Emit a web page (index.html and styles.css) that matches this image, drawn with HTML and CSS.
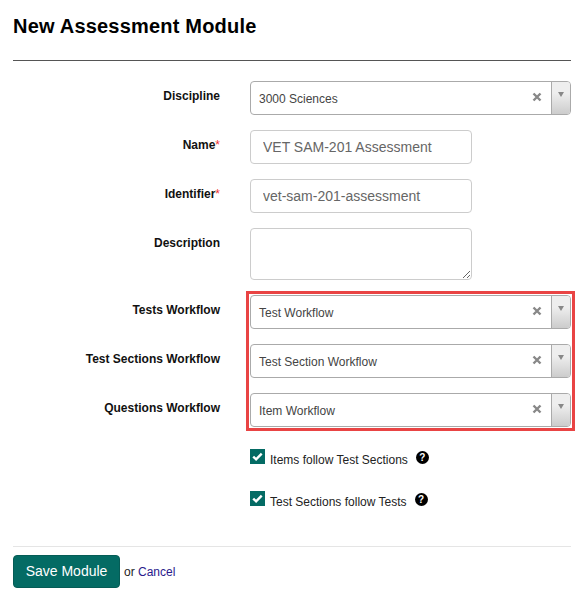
FILE: index.html
```html
<!DOCTYPE html>
<html lang="en">
<head>
    <meta charset="UTF-8">
    <meta name="viewport" content="width=device-width, initial-scale=1.0">
    <title>New Assessment Module</title>
    <link rel="stylesheet" href="styles.css">
</head>
<body>
    <h1>New Assessment Module</h1>
    <hr class="title-rule">

    <form class="module-form">
        <div class="form-row">
            <label class="row-label">Discipline</label>
            <div class="select-box">
                <span class="select-value">3000 Sciences</span>
                <span class="select-clear"><svg width="10" height="10" viewBox="0 0 10 10"><path d="M1.5 1.5l7 7M8.5 1.5l-7 7"/></svg></span>
                <span class="select-arrow"></span>
            </div>
        </div>
        <div class="form-row">
            <label class="row-label">Name<span class="required">*</span></label>
            <input class="text-input" type="text" value="VET SAM-201 Assessment">
        </div>
        <div class="form-row">
            <label class="row-label">Identifier<span class="required">*</span></label>
            <input class="text-input" type="text" value="vet-sam-201-assessment">
        </div>
        <div class="form-row">
            <label class="row-label">Description</label>
            <textarea class="text-area"></textarea>
        </div>

        <div class="workflow-group">
            <div class="form-row">
                <label class="row-label">Tests Workflow</label>
                <div class="select-box">
                    <span class="select-value">Test Workflow</span>
                    <span class="select-clear"><svg width="10" height="10" viewBox="0 0 10 10"><path d="M1.5 1.5l7 7M8.5 1.5l-7 7"/></svg></span>
                    <span class="select-arrow"></span>
                </div>
            </div>
            <div class="form-row">
                <label class="row-label">Test Sections Workflow</label>
                <div class="select-box">
                    <span class="select-value">Test Section Workflow</span>
                    <span class="select-clear"><svg width="10" height="10" viewBox="0 0 10 10"><path d="M1.5 1.5l7 7M8.5 1.5l-7 7"/></svg></span>
                    <span class="select-arrow"></span>
                </div>
            </div>
            <div class="form-row">
                <label class="row-label">Questions Workflow</label>
                <div class="select-box">
                    <span class="select-value">Item Workflow</span>
                    <span class="select-clear"><svg width="10" height="10" viewBox="0 0 10 10"><path d="M1.5 1.5l7 7M8.5 1.5l-7 7"/></svg></span>
                    <span class="select-arrow"></span>
                </div>
            </div>
            <div class="highlight"></div>
        </div>

        <div class="check-row">
            <span class="check-box"><svg width="15" height="15" viewBox="0 0 15 15"><path d="M3.2 7.6l2.9 2.7 5.6-5.6"/></svg></span>
            <span class="check-label">Items follow Test Sections</span>
            <span class="help-icon">?</span>
        </div>
        <div class="check-row">
            <span class="check-box"><svg width="15" height="15" viewBox="0 0 15 15"><path d="M3.2 7.6l2.9 2.7 5.6-5.6"/></svg></span>
            <span class="check-label">Test Sections follow Tests</span>
            <span class="help-icon">?</span>
        </div>

        <div class="form-actions">
            <button class="save-btn" type="button">Save Module</button>
            <span class="or-text">or <a href="#">Cancel</a></span>
        </div>
    </form>
</body>
</html>
```

FILE: styles.css
```css
body {
    margin: 0;
    padding: 0 6px 0 13px;
    background: #fff;
    color: #000;
    font-family: "Liberation Sans", Arial, sans-serif;
    font-size: 12px;
}
h1 {
    margin: 0;
    padding-top: 13px;
    font-size: 20px;
    letter-spacing: 0.2px;
    line-height: 26px;
    font-weight: bold;
}
.title-rule {
    margin: 21px 0 20px;
    border: 0;
    border-top: 1px solid #555;
}
.form-row {
    display: flex;
    align-items: flex-start;
    margin-bottom: 15px;
}
.row-label {
    width: 207px;
    padding-top: 7px;
    margin-right: 30px;
    text-align: right;
    font-weight: bold;
    line-height: 16px;
    color: #111;
}
.required {
    color: #e33;
    font-weight: normal;
}
.select-box {
    display: flex;
    align-items: stretch;
    box-sizing: border-box;
    width: 321px;
    height: 34px;
    border: 1px solid #aaa;
    border-radius: 4px;
    background: #fff;
}
.select-value {
    flex: 1;
    padding: 9px 0 0 8px;
    line-height: 16px;
    color: #444;
}
.select-clear {
    width: 10px;
    margin-right: 9px;
    padding-top: 9px;
}
.select-clear path {
    fill: none;
    stroke: #888;
    stroke-width: 2.4;
}
.select-arrow {
    position: relative;
    width: 18px;
    border-left: 1px solid #aaa;
    border-radius: 0 3px 3px 0;
    background: linear-gradient(#eee, #eee 35%, #ccc);
}
.select-arrow::after {
    content: "";
    position: absolute;
    left: 6px;
    top: 10px;
    border: 3.5px solid transparent;
    border-top: 5px solid #888;
    border-bottom: 0;
}
.text-input,
.text-area {
    box-sizing: border-box;
    width: 222px;
    border: 1px solid #ccc;
    border-radius: 4px;
    font-family: inherit;
    font-size: 14px;
    color: #666;
    outline: 0;
}
.text-input {
    height: 34px;
    padding: 0 12px;
}
.text-area {
    display: block;
    height: 52px;
    padding: 6px 12px;
}
.workflow-group {
    position: relative;
    margin-bottom: 22px;
}
.highlight {
    position: absolute;
    left: 233px;
    top: -4px;
    width: 329px;
    height: 140px;
    box-sizing: border-box;
    border: 3px solid #e94444;
}
.check-row {
    display: flex;
    align-items: flex-start;
    margin: 0 0 26px 237px;
    height: 16px;
}
.check-box {
    width: 15px;
    height: 15px;
    background: #046b64;
}
.check-box svg {
    display: block;
}
.check-box path {
    fill: none;
    stroke: #fff;
    stroke-width: 2.4;
}
.check-label {
    margin-left: 5px;
    padding-top: 4px;
    line-height: 15px;
    color: #222;
}
.help-icon {
    width: 13px;
    height: 13px;
    margin: 2px 0 0 8px;
    border-radius: 50%;
    background: #000;
    color: #fff;
    font-size: 10px;
    font-weight: bold;
    line-height: 13px;
    text-align: center;
}
.form-actions {
    display: flex;
    align-items: center;
    margin-top: 39px;
    padding-top: 8px;
    border-top: 1px solid #e5e5e5;
}
.save-btn {
    width: 107px;
    height: 33px;
    padding: 0 0 2px;
    border: 1px solid #055c56;
    border-radius: 4px;
    background: #046b64;
    color: #fff;
    font-family: inherit;
    font-size: 14px;
}
.or-text {
    margin-left: 4px;
    color: #222;
}
.or-text a {
    color: #2a1a8c;
    text-decoration: none;
}
```
